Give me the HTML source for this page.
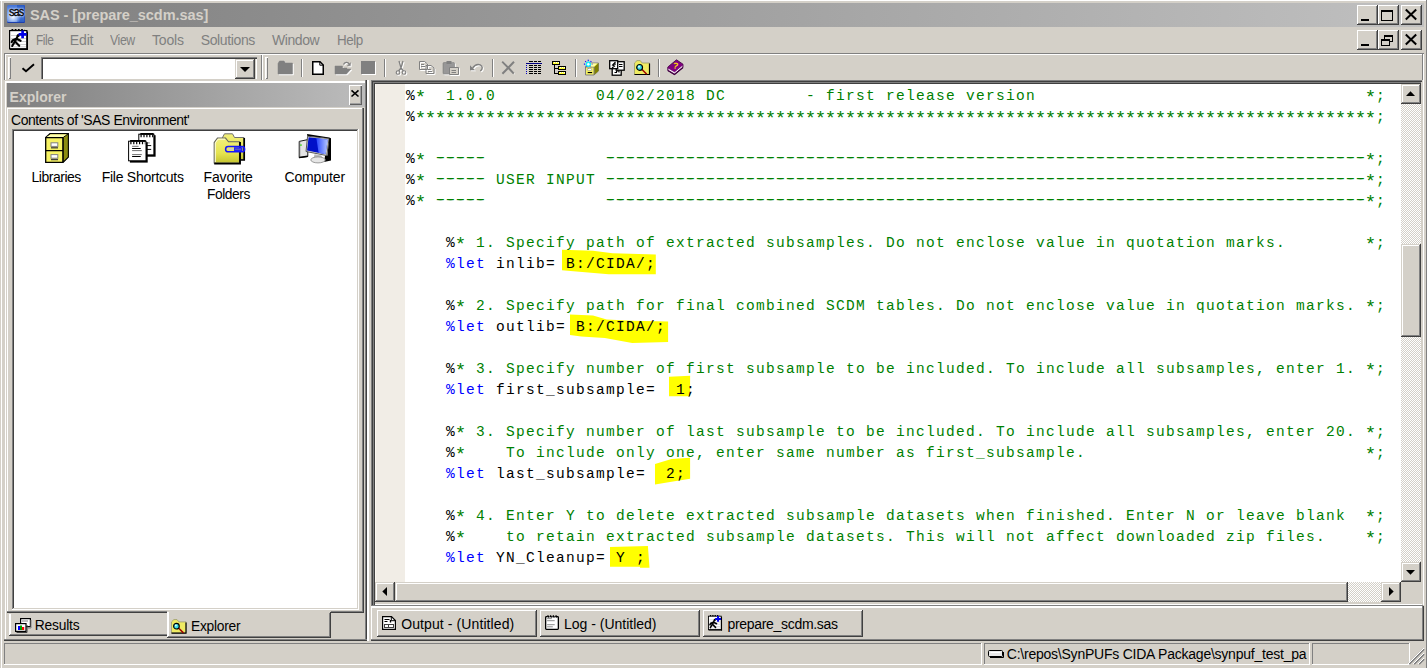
<!DOCTYPE html>
<html lang="en">
<head>
<meta charset="utf-8">
<title>SAS - [prepare_scdm.sas]</title>
<style>
*{box-sizing:border-box;margin:0;padding:0}
html,body{width:1427px;height:668px;overflow:hidden;background:#d4d0c8}
body{position:relative;font-family:"Liberation Sans","DejaVu Sans",sans-serif;font-size:14px;color:#000}
.a{position:absolute}
.raised{box-shadow:inset -1px -1px #404040,inset 1px 1px #fff,inset -2px -2px #808080,inset 2px 2px #d4d0c8;background:#d4d0c8}
.raisedsb{box-shadow:inset -1px -1px #404040,inset 1px 1px #d4d0c8,inset -2px -2px #808080,inset 2px 2px #fff;background:#d4d0c8}
.raised1{box-shadow:inset -1px -1px #808080,inset 1px 1px #fff;background:#d4d0c8}
.sunken{box-shadow:inset -1px -1px #fff,inset 1px 1px #808080,inset -2px -2px #d4d0c8,inset 2px 2px #404040}
.sunken1{box-shadow:inset -1px -1px #fff,inset 1px 1px #808080}
.pressed{box-shadow:inset -1px -1px #fff,inset 1px 1px #404040,inset -2px -2px #d4d0c8,inset 2px 2px #808080;background:#d4d0c8}
.t{position:absolute;white-space:pre;line-height:1}
.menu{color:#808080;font-size:15.5px;top:32px}
.cl{position:absolute;left:406px;height:21px;line-height:21px;white-space:pre;font-family:"Liberation Mono","DejaVu Sans Mono",monospace;font-size:14.5px;letter-spacing:1.2985px}
.ds{text-shadow:1.6px 0 0 #008000,-1.6px 0 0 #008000;position:relative;top:-1px}
.st{font-size:19px;letter-spacing:-1.402px;position:relative;top:2.5px;left:-1.3px;line-height:1px}
.dither{background-image:conic-gradient(#fff 25%,#d4d0c8 0 50%,#fff 0 75%,#d4d0c8 0);background-size:2px 2px}
svg{position:absolute;overflow:visible}
</style>
</head>
<body>
<!-- window frame -->
<div class="a" style="left:0;top:0;width:1427px;height:1px;background:#fff"></div>
<div class="a" style="left:1426px;top:0;width:1px;height:668px;background:#808080"></div>
<div class="a" style="left:1px;top:0;width:1px;height:668px;background:#fff"></div>

<!-- title bar -->
<div class="a" id="titlebar" style="left:4px;top:3px;width:1420px;height:24px;background:linear-gradient(90deg,#808080,#c0c0c0)"></div>
<div class="a" style="left:7px;top:5px;width:18px;height:18px;border-radius:2px 1px 1px 1px;background:radial-gradient(circle at 6px 12px,#fff 0,#b4ccf6 3px,rgba(120,160,235,0) 8px),linear-gradient(90deg,rgba(255,255,255,.12) 0 55%,rgba(0,0,0,.06) 55%),linear-gradient(180deg,#2a5fd0 0,#5a8ee8 40%,#4a7ee2 56%,#2f62d0 100%);box-shadow:inset 0 -1px #1c3fae,inset -1px 0 #2a52c0"></div>
<div class="t" style="left:8.5px;top:5.5px;font-size:12px;letter-spacing:-1px;color:#000;-webkit-text-stroke:0.3px #000;text-shadow:0 0 2px #e4ecff,0 0 2px #e4ecff,0 0 3px #cfdcff;transform-origin:0 0;transform:scaleX(.92)">sas</div>

<div class="t" style="left:29.90px;top:7.75px;font-size:14.5px;font-weight:bold;color:#d4d0c8;letter-spacing:-0.056px">SAS - [prepare_scdm.sas]</div>

<div class="a raised" style="left:1357px;top:5px;width:21px;height:20px;"></div>
<div class="a" style="left:1361px;top:19px;width:8px;height:2px;background:#000"></div>
<div class="a raised" style="left:1378px;top:5px;width:21px;height:20px;"></div>
<div class="a" style="left:1381px;top:10px;width:12px;height:11px;border:1px solid #000;border-top-width:2px"></div>
<div class="a raised" style="left:1401px;top:5px;width:21px;height:20px;"></div>
<svg style="left:1405px;top:9px" width="12" height="11" viewBox="0 0 12 11"><path d="M0.8 0.5 L11.2 10.5 M11.2 0.5 L0.8 10.5" stroke="#000" stroke-width="2" fill="none"/></svg>
<div class="a raised" style="left:1357px;top:30px;width:21px;height:20px;"></div>
<div class="a" style="left:1361px;top:44px;width:8px;height:2px;background:#000"></div>
<div class="a raised" style="left:1378px;top:30px;width:21px;height:20px;"></div>
<div class="a" style="left:1384px;top:35px;width:9px;height:7px;border:1px solid #000;border-top-width:2px"></div>
<div class="a" style="left:1381px;top:39px;width:9px;height:7px;border:1px solid #000;border-top-width:2px;background:#d4d0c8"></div>
<div class="a raised" style="left:1401px;top:30px;width:21px;height:20px;"></div>
<svg style="left:1405px;top:34px" width="12" height="11" viewBox="0 0 12 11"><path d="M0.8 0.5 L11.2 10.5 M11.2 0.5 L0.8 10.5" stroke="#000" stroke-width="2" fill="none"/></svg>


<!-- menu bar -->
<svg style="left:9px;top:29px" width="19" height="21" viewBox="0 0 19 21">
<rect x="0.6" y="1.6" width="17.3" height="18.3" fill="#fff" stroke="#000" stroke-width="1.2"/>
<path d="M2.5 0.8h13" stroke="#000" stroke-width="1.6" stroke-dasharray="1.8 1.4"/>
<path d="M2 6.5h15M2 9.5h15M2 12.5h15M2 15.5h15M2 17.8h15" stroke="#cfcfcf"/>
<rect x="17.6" y="2.5" width="1.4" height="18.5" fill="#000"/><rect x="1" y="19.4" width="18" height="1.6" fill="#000"/>
<path d="M8.6 7.2L5.6 13.4M6.4 11.6L3.2 17M6 12.6L10.2 16.8M7.4 9.8L11.6 11.8M7.2 9.6L3.6 11.4L2.6 13.2" stroke="#000" stroke-width="2.1" fill="none" stroke-linecap="round"/>
<circle cx="9.2" cy="6.6" r="1.5" fill="#000"/>
<path d="M13.6 1.4v7.8M9.6 5.3h8" stroke="#0000e8" stroke-width="2.7"/>
</svg>

<div class="t" style="left:35.85px;top:32.50px;font-size:14px;font-weight:normal;color:#808080;letter-spacing:-0.450px;transform-origin:0 0;transform:scaleX(0.8471)">File</div>
<div class="t" style="left:69.80px;top:32.50px;font-size:14px;font-weight:normal;color:#808080;letter-spacing:-0.145px">Edit</div>
<div class="t" style="left:110.00px;top:32.50px;font-size:14px;font-weight:normal;color:#808080;letter-spacing:-0.450px;transform-origin:0 0;transform:scaleX(0.8774)">View</div>
<div class="t" style="left:152.00px;top:32.50px;font-size:14px;font-weight:normal;color:#808080;letter-spacing:-0.171px">Tools</div>
<div class="t" style="left:200.70px;top:32.50px;font-size:14px;font-weight:normal;color:#808080;letter-spacing:-0.374px">Solutions</div>
<div class="t" style="left:272.00px;top:32.50px;font-size:14px;font-weight:normal;color:#808080;letter-spacing:-0.417px">Window</div>
<div class="t" style="left:336.74px;top:32.50px;font-size:14px;font-weight:normal;color:#808080;letter-spacing:-0.450px;transform-origin:0 0;transform:scaleX(0.9566)">Help</div>


<!-- toolbar -->
<div class="a" style="left:4px;top:53px;width:1420px;height:1px;background:#808080"></div>
<div class="a" style="left:4px;top:54px;width:1420px;height:1px;background:#fff"></div>
<div class="a" style="left:4px;top:54px;width:1px;height:26px;background:#808080"></div>
<div class="a" style="left:5px;top:55px;width:1px;height:25px;background:#fff"></div>
<div class="a" style="left:1422px;top:54px;width:1px;height:27px;background:#808080"></div>
<div class="a" style="left:1423px;top:54px;width:1px;height:551px;background:#fff"></div>
<div class="a" style="left:8px;top:57px;width:3px;height:22px;box-shadow:inset 1px 1px #fff,inset -1px -1px #808080;background:#f0eeea"></div>
<svg style="left:21px;top:63px" width="14" height="10" viewBox="0 0 14 10"><path d="M1.5 5.2 L5 8.3 L13 1.2" stroke="#000" stroke-width="1.9" fill="none"/></svg>
<div class="a" style="left:41px;top:57px;width:216px;height:22px;background:#fff;box-shadow:inset 1px 1px #808080,inset 2px 2px #404040,inset -1px 0 #fff,inset -2px 0 #d4d0c8"></div>
<div class="a raisedsb" style="left:235px;top:59px;width:20px;height:20px;"></div>
<svg style="left:240px;top:67px" width="10" height="5" viewBox="0 0 10 5"><path d="M0 0h10l-5 5z" fill="#000"/></svg>
<div class="a" style="left:261px;top:55px;width:1px;height:25px;background:#808080"></div>
<div class="a" style="left:262px;top:55px;width:1px;height:25px;background:#fff"></div>
<div class="a" style="left:265px;top:57px;width:3px;height:22px;box-shadow:inset 1px 1px #fff,inset -1px -1px #808080;background:#f0eeea"></div>
<svg style="left:278px;top:61px" width="16" height="14" viewBox="0 0 16 14"><g transform="translate(1,1)" fill="#fff" stroke="#fff"><path d="M0 13V2.5L1.5 0H6L7.5 2H14.5V13Z" stroke-width="0.5"/></g><g fill="#808080" stroke="#808080"><path d="M0 13V2.5L1.5 0H6L7.5 2H14.5V13Z" stroke-width="0.5"/></g></svg>
<div class="a" style="left:301px;top:59px;width:1px;height:18px;background:#808080"></div>
<div class="a" style="left:302px;top:59px;width:1px;height:18px;background:#fff"></div>
<svg style="left:312px;top:61px" width="12" height="14" viewBox="0 0 12 14"><path d="M0.75 0.75H8L11.25 4V13.25H0.75Z" fill="#fff" stroke="#000" stroke-width="1.5"/><path d="M7.8 0.8V4.2H11.2" fill="none" stroke="#000" stroke-width="1"/></svg>
<svg style="left:335px;top:61px" width="17" height="14" viewBox="0 0 17 14"><g transform="translate(1,1)" fill="#fff" stroke="#fff"><path d="M0 13V5H7.5V7H12V8H16L11.5 13Z" stroke-width="0.5"/><path d="M8.5 3.5C9.5 0.8 13 0.5 14.3 3.2" fill="none" stroke-width="1.2"/><path d="M15.5 1.5V4.8H12.2Z" stroke-width="0.3"/></g><g fill="#808080" stroke="#808080"><path d="M0 13V5H7.5V7H12V8H16L11.5 13Z" stroke-width="0.5"/><path d="M8.5 3.5C9.5 0.8 13 0.5 14.3 3.2" fill="none" stroke-width="1.2"/><path d="M15.5 1.5V4.8H12.2Z" stroke-width="0.3"/></g></svg>
<svg style="left:361px;top:61px" width="15" height="14" viewBox="0 0 15 14"><g transform="translate(1,1)" fill="#fff" stroke="#fff"><rect x="0" y="0" width="14" height="13" stroke="none"/></g><g fill="#808080" stroke="#808080"><rect x="0" y="0" width="14" height="13" stroke="none"/></g></svg>
<div class="a" style="left:384px;top:59px;width:1px;height:18px;background:#808080"></div>
<div class="a" style="left:385px;top:59px;width:1px;height:18px;background:#fff"></div>
<svg style="left:396px;top:61px" width="11" height="15" viewBox="0 0 11 15"><g transform="translate(1,1)" fill="#fff" stroke="#fff"><path d="M3 0L5 7L7 0M5 7L2.5 10M5 7L7.5 10" fill="none" stroke-width="1.3"/><circle cx="2" cy="11.5" r="1.8" fill="none" stroke-width="1.1"/><circle cx="8" cy="11.5" r="1.8" fill="none" stroke-width="1.1"/></g><g fill="#808080" stroke="#808080"><path d="M3 0L5 7L7 0M5 7L2.5 10M5 7L7.5 10" fill="none" stroke-width="1.3"/><circle cx="2" cy="11.5" r="1.8" fill="none" stroke-width="1.1"/><circle cx="8" cy="11.5" r="1.8" fill="none" stroke-width="1.1"/></g></svg>
<svg style="left:419px;top:61px" width="17" height="14" viewBox="0 0 17 14"><g transform="translate(1,1)" fill="#fff" stroke="#fff"><path d="M0.5 0.5H5.5L8.5 3V8.5H0.5Z M7 4.5H12L15 7V12.5H7Z" fill="none" stroke-width="1"/><path d="M2 3.5H5M2 5.5H6M9 8.5H12M9 10.5H13" fill="none" stroke-width="1"/></g><g fill="#808080" stroke="#808080"><path d="M0.5 0.5H5.5L8.5 3V8.5H0.5Z M7 4.5H12L15 7V12.5H7Z" fill="none" stroke-width="1"/><path d="M2 3.5H5M2 5.5H6M9 8.5H12M9 10.5H13" fill="none" stroke-width="1"/></g></svg>
<svg style="left:443px;top:61px" width="17" height="15" viewBox="0 0 17 15"><g transform="translate(1,1)" fill="#fff" stroke="#fff"><rect x="0" y="1.5" width="11.5" height="11.5" rx="1" fill-opacity=".8" stroke-width=".6"/><rect x="3.5" y="0" width="5" height="3" stroke="none"/><path d="M6.5 6.5H15.5V13.5H6.5Z" fill="#d4d0c8" stroke-width="1"/><path d="M8.5 9.5H13M8.5 11.5H13" fill="none" stroke-width="1"/></g><g fill="#808080" stroke="#808080"><rect x="0" y="1.5" width="11.5" height="11.5" rx="1" fill-opacity=".8" stroke-width=".6"/><rect x="3.5" y="0" width="5" height="3" stroke="none"/><path d="M6.5 6.5H15.5V13.5H6.5Z" fill="#d4d0c8" stroke-width="1"/><path d="M8.5 9.5H13M8.5 11.5H13" fill="none" stroke-width="1"/></g></svg>
<svg style="left:470px;top:63px" width="14" height="10" viewBox="0 0 14 10"><g transform="translate(1,1)" fill="#fff" stroke="#fff"><path d="M0 2.2V7.2H5Z" stroke="none"/><path d="M2.6 5C4.5 2.2 7.5 0.9 10.2 1.8C13 3 12.8 6.4 10.3 7.9" fill="none" stroke-width="1.4"/></g><g fill="#808080" stroke="#808080"><path d="M0 2.2V7.2H5Z" stroke="none"/><path d="M2.6 5C4.5 2.2 7.5 0.9 10.2 1.8C13 3 12.8 6.4 10.3 7.9" fill="none" stroke-width="1.4"/></g></svg>
<div class="a" style="left:492px;top:59px;width:1px;height:18px;background:#808080"></div>
<div class="a" style="left:493px;top:59px;width:1px;height:18px;background:#fff"></div>
<svg style="left:501px;top:61px" width="15" height="14" viewBox="0 0 15 14"><path d="M2 1L13.6 13.2" stroke="#fff" stroke-width="1.2" fill="none"/><path d="M1.2 0.6L9 8.5L12.8 12.6M13 0.8L1.4 12.8" stroke="#808080" stroke-width="2" fill="none"/></svg>
<svg style="left:526px;top:61px" width="16" height="13" viewBox="0 0 16 13" shape-rendering="crispEdges"><rect x="3" y="0" width="4" height="1" fill="#000"/><rect x="8" y="0" width="3" height="1" fill="#000"/><rect x="12" y="0" width="3" height="1" fill="#000"/><rect x="3" y="4" width="4" height="1" fill="#000"/><rect x="8" y="4" width="3" height="1" fill="#000"/><rect x="12" y="4" width="3" height="1" fill="#000"/><rect x="3" y="6" width="4" height="1" fill="#000"/><rect x="8" y="6" width="3" height="1" fill="#000"/><rect x="12" y="6" width="3" height="1" fill="#000"/><rect x="3" y="8" width="4" height="1" fill="#000"/><rect x="8" y="8" width="3" height="1" fill="#000"/><rect x="12" y="8" width="3" height="1" fill="#000"/><rect x="3" y="10" width="4" height="1" fill="#000"/><rect x="8" y="10" width="3" height="1" fill="#000"/><rect x="12" y="10" width="3" height="1" fill="#000"/><rect x="3" y="12" width="4" height="1" fill="#000"/><rect x="8" y="12" width="3" height="1" fill="#000"/><rect x="12" y="12" width="3" height="1" fill="#000"/><rect x="0" y="2" width="16" height="1" fill="#000080"/><rect x="0" y="4" width="1" height="1" fill="#0000c0"/><rect x="0" y="6" width="1" height="1" fill="#0000c0"/><rect x="0" y="8" width="1" height="1" fill="#0000c0"/><rect x="0" y="10" width="1" height="1" fill="#0000c0"/><rect x="0" y="12" width="1" height="1" fill="#0000c0"/></svg>
<svg style="left:552px;top:61px" width="14" height="14" viewBox="0 0 14 14" shape-rendering="crispEdges"><path d="M2.5 4V12.5H6M2.5 7.5H6" stroke="#000" fill="none" stroke-width="1"/><rect x="0.5" y="0.5" width="7" height="3" fill="#ffff30" stroke="#000" stroke-width="1"/><rect x="2" y="1" width="1" height="1" fill="#fff"/><rect x="4" y="1" width="1" height="1" fill="#fff"/><rect x="6" y="1" width="1" height="1" fill="#fff"/><rect x="6.5" y="5.5" width="7" height="3" fill="#ffff30" stroke="#000" stroke-width="1"/><rect x="8" y="6" width="1" height="1" fill="#fff"/><rect x="10" y="6" width="1" height="1" fill="#fff"/><rect x="12" y="6" width="1" height="1" fill="#fff"/><rect x="6.5" y="10.5" width="7" height="3" fill="#ffff30" stroke="#000" stroke-width="1"/><rect x="8" y="11" width="1" height="1" fill="#fff"/><rect x="10" y="11" width="1" height="1" fill="#fff"/><rect x="12" y="11" width="1" height="1" fill="#fff"/></svg>
<div class="a" style="left:575px;top:59px;width:1px;height:18px;background:#808080"></div>
<div class="a" style="left:576px;top:59px;width:1px;height:18px;background:#fff"></div>
<svg style="left:584px;top:59px" width="16" height="17" viewBox="0 0 16 17"><path d="M1.5 8L4 4H14.5V12L10 16H1.5Z" fill="#f4f060" stroke="#808080" stroke-width="1"/><path d="M10 8L14.5 4V12L10 16Z" fill="#808000"/><path d="M1.5 8H10V16" fill="none" stroke="#808080" stroke-width="1"/><path d="M2.4 7.4L4.4 4.6H13L10 7.4Z" fill="#ffffa8"/><rect x="3.7" y="9.7" width="3.8" height="1.7" fill="#fff" stroke="#a0a0a0" stroke-width=".6"/><rect x="3.7" y="13" width="4.4" height="1.1" fill="#000"/><g transform="translate(4.3,5.2)"><path d="M0 -4.4V4.4M-4.4 0H4.4M-3 -3L3 3M3 -3L-3 3" stroke="#0000ff" stroke-width="1.3" stroke-dasharray="1 1.1"/><circle r="2.6" fill="#00e8ff"/><path d="M0 -3.4L1 -1L3.4 0L1 1L0 3.4L-1 1L-3.4 0L-1 -1Z" fill="#30f0ff"/><circle r="1.2" fill="#fff"/></g></svg>
<svg style="left:609px;top:60px" width="16" height="16" viewBox="0 0 16 16"><rect x="3.2" y="6.2" width="9" height="9" fill="#fff" stroke="#000" stroke-width="1.3"/><rect x="7.2" y="1.7" width="8" height="8.5" fill="#fff" stroke="#000" stroke-width="1.3"/><rect x="0.7" y="0.7" width="8" height="8" fill="#fff" stroke="#000" stroke-width="1.3"/><path d="M6.5 2L3.5 5L5.5 6L3 8M4 4.5L7 4M10 4.5H13.5M10 6.5H13.5M5.5 12.5H7.5V11H10V12.5" stroke="#000" stroke-width="1.1" fill="none"/></svg>
<svg style="left:634px;top:60px" width="16" height="15" viewBox="0 0 16 15"><path d="M0.5 14.5V3L3 0.6H6.2L8.2 3H15.5V14.5Z" fill="#efeb62" stroke="#a0a070" stroke-width=".9"/><path d="M0.5 14.5H15.5V3.5" fill="none" stroke="#000" stroke-width="1.2"/><path d="M8 9.5L12.8 14.3" stroke="#a00000" stroke-width="1.5"/><circle cx="5.6" cy="7.4" r="2.9" fill="#38dce8" stroke="#000" stroke-width="1.2"/><circle cx="5" cy="6.8" r="1" fill="#e0ffff"/></svg>
<div class="a" style="left:658px;top:59px;width:1px;height:18px;background:#808080"></div>
<div class="a" style="left:659px;top:59px;width:1px;height:18px;background:#fff"></div>
<svg style="left:667px;top:59px" width="17" height="16" viewBox="0 0 17 16"><path d="M0.8 8L9.5 0.8L16 5.2V8.5L7.5 15.5L0.8 11.5Z" fill="#800080" stroke="#400040" stroke-width=".8"/><path d="M1.2 9.2L7.6 13L15.6 6.2V8.3L7.6 14.9L1.2 11.2Z" fill="#fff" stroke="#600060" stroke-width=".5"/><path d="M0.8 11.5L7.5 15.5L16 8.5" fill="none" stroke="#400040" stroke-width="1.1"/><text x="8.6" y="9.6" font-family="Liberation Sans,sans-serif" font-weight="bold" font-size="8.5" fill="#ffe000" text-anchor="middle" transform="rotate(12 8.6 7)">?</text></svg>


<!-- explorer panel -->
<div class="a" style="left:5px;top:81px;width:360px;height:1px;background:#fff"></div>
<div class="a" style="left:5px;top:82px;width:360px;height:1px;background:#fff"></div>
<div class="a" style="left:5px;top:82px;width:1px;height:558px;background:#fff"></div>
<div class="a" style="left:365px;top:80px;width:1px;height:560px;background:#808080"></div>
<div class="a" style="left:366px;top:80px;width:1px;height:561px;background:#404040"></div>
<div class="a" style="left:367px;top:80px;width:1px;height:561px;background:#fff"></div>
<div class="a" style="left:368px;top:80px;width:1px;height:561px;background:#fff"></div>
<div class="a" style="left:7px;top:83px;width:358px;height:24px;background:linear-gradient(90deg,#808080,#bcbcbc)"></div>
<div class="t" style="left:9.60px;top:90.00px;font-size:14px;font-weight:bold;color:#d4d0c8;letter-spacing:0.021px">Explorer</div>
<div class="a" style="left:349px;top:85px;width:13px;height:20px;box-shadow:inset 1px 1px #fff,inset -1px -1px #606060,inset -2px -2px #a0a0a0;background:#d4d0c8"></div>
<svg style="left:351px;top:90px" width="8" height="7" viewBox="0 0 8 7"><path d="M0.5 0.3L7.5 6.5M7.5 0.3L0.5 6.5" stroke="#000" stroke-width="1.6" fill="none"/></svg>
<div class="a" style="left:7px;top:108px;width:356px;height:1px;background:#fff"></div>
<div class="a" style="left:7px;top:108px;width:1px;height:504px;background:#fff"></div>
<div class="a" style="left:362px;top:108px;width:1px;height:504px;background:#808080"></div>
<div class="a" style="left:363px;top:108px;width:1px;height:505px;background:#404040"></div>
<div class="a" style="left:7px;top:611px;width:160px;height:1px;background:#808080"></div>
<div class="a" style="left:7px;top:612px;width:160px;height:1px;background:#404040"></div>
<div class="a" style="left:331px;top:611px;width:32px;height:1px;background:#808080"></div>
<div class="a" style="left:331px;top:612px;width:33px;height:1px;background:#404040"></div>
<div class="t" style="left:11.20px;top:113.10px;font-size:14.2px;font-weight:normal;color:#000;letter-spacing:-0.450px;transform-origin:0 0;transform:scaleX(0.9857)">Contents of &#x27;SAS Environment&#x27;</div>
<div class="a sunken" style="left:12px;top:129px;width:347px;height:481px;background:#fff"></div>
<svg style="left:45px;top:133px" width="24" height="30" viewBox="0 0 24 30"><path d="M0.7 4.6L5 0.7H23.3V24L18 29.3H0.7Z" fill="#f6f264" stroke="#000" stroke-width="1.3"/>
<path d="M18 4.6L23.3 0.7V24L18 29.3Z" fill="#8c8c10" stroke="#000" stroke-width="1"/>
<path d="M1.6 4L5.4 1.5H21.6L17.8 4Z" fill="#fdfdb0"/>
<path d="M0.7 4.6H18M0.7 17.6H18M18 4.6V29.3" stroke="#000" stroke-width="1.2" fill="none"/>
<rect x="6" y="9.8" width="6.8" height="3.6" fill="#fff" stroke="#808080" stroke-width="1"/><path d="M6 14.8H13" stroke="#404040" stroke-width="1.3"/>
<rect x="6" y="21.6" width="6.8" height="3.6" fill="#fff" stroke="#808080" stroke-width="1"/><path d="M6 26.6H13" stroke="#404040" stroke-width="1.3"/></svg>
<svg style="left:128px;top:133px" width="28" height="30" viewBox="0 0 28 30"><rect x="12.1" y="2.2" width="15.5" height="21.5" fill="#000"/><rect x="10.8" y="1.2" width="15.1" height="20.7" fill="#fff" stroke="#000" stroke-width="1"/><rect x="12.3" y="0" width="13.3" height="1.8" fill="#000"/><path d="M12.5 3H25.1" stroke="#000" stroke-width="2.6" stroke-dasharray="1.2 1.7"/><path d="M19 9.9H21.8" stroke="#808080" stroke-width="1"/><path d="M19 12.6H23.2M19 16.4H23.2" stroke="#000" stroke-width="1"/><rect x="1.9" y="9.2" width="17.8" height="20.4" fill="#000"/><rect x="0.6" y="8.2" width="17.4" height="19.6" fill="#fff" stroke="#000" stroke-width="1"/><rect x="2.1" y="7" width="15.6" height="1.8" fill="#000"/><path d="M2.3 10H17.2" stroke="#000" stroke-width="2.6" stroke-dasharray="1.2 1.7"/><path d="M4.1 13.3H10.6M4.1 17.6H13.8M4.1 21.6H13.8" stroke="#707070" stroke-width="1"/><path d="M4.1 15.5H12.7M4.1 23.5H12.7" stroke="#000" stroke-width="1.1"/></svg>
<svg style="left:213px;top:133px" width="32" height="32" viewBox="0 0 32 32"><defs><linearGradient id="fg" x1="0" y1="0" x2="0" y2="1"><stop offset="0" stop-color="#f2f07c"/><stop offset=".6" stop-color="#e6e450"/><stop offset="1" stop-color="#c4c430"/></linearGradient></defs><path d="M9.5 4.5L11.5 0.8H19.5L21.5 4.5H31V26.5H9.5Z" fill="url(#fg)" stroke="#707070" stroke-width="1"/><path d="M27.5 27H31.2V5" fill="none" stroke="#000" stroke-width="1.7"/><path d="M1.2 30V9.5L4.5 5H12.5L15.5 8.8H26.5V30Z" fill="url(#fg)" stroke="#606060" stroke-width="1.1"/><path d="M1.2 30.6H27V9" fill="none" stroke="#000" stroke-width="1.9"/><path d="M2.3 29V10L5 6.2H12" fill="none" stroke="#fcfce0" stroke-width="1"/><rect x="12.6" y="13.6" width="19" height="5.2" rx="2.6" fill="none" stroke="#1414ff" stroke-width="1.5"/><path d="M21 14.2H29.5V18.2H21Z" fill="#2020ff"/><path d="M15.5 16.2H20.5" stroke="#c8c8c8" stroke-width="1.6"/><path d="M22.5 16.2H28" stroke="#c0c050" stroke-width="1" stroke-dasharray="1 1"/></svg>
<svg style="left:298px;top:133px" width="34" height="31" viewBox="0 0 34 31"><defs><linearGradient id="sg" x1="0" y1="0" x2="1" y2="0"><stop offset="0" stop-color="#2a48ff"/><stop offset="1" stop-color="#b4c6ff"/></linearGradient></defs><path d="M1.2 8.4L9.8 6.6V23.5L1.2 24.7Z" fill="#e4e4e4" stroke="#000" stroke-width=".9"/><path d="M1.6 8.6V24.4" stroke="#606060" stroke-width="1.2"/><path d="M1.2 24.4L9.8 23.3" stroke="#000" stroke-width="1.5"/><rect x="2.2" y="11.3" width="1.5" height="1.6" fill="#40d020"/><path d="M9 1L20 2.8L31.2 4.6L33 5.2V27.5L26 29L27 23L29.5 22.6L31 5.6L9.4 3Z" fill="#000"/><path d="M9.6 3.2L31 5.5L28.8 22.6L8 18.5Z" fill="#e0e0d8" stroke="#303030" stroke-width=".8"/><path d="M10.6 4.3L29.7 6.4L27.6 21.2L9 17.5Z" fill="#0010c8"/><path d="M18.4 5.2L29.7 6.4L27.6 21.2L20.6 19.8Z" fill="url(#sg)"/><path d="M16.5 21.2L23.5 22.6L24.5 26H15.5Z" fill="#b8b8b8"/><ellipse cx="20" cy="26.9" rx="7.2" ry="3" fill="#e6e6e6" stroke="#909090" stroke-width=".9"/></svg>
<svg style="left:15px;top:618px" width="17" height="15" viewBox="0 0 17 15"><rect x="5.6" y="0.6" width="9.8" height="8" fill="#fff" stroke="#000" stroke-width="1.2"/><path d="M7 3H13" stroke="#808080"/><path d="M16 2V10H13" stroke="#808080" stroke-width="1" fill="none"/><rect x="0.6" y="5.6" width="10.4" height="7.8" fill="#fff" stroke="#000" stroke-width="1.2"/><path d="M1.5 14.5H12V7" stroke="#404040" stroke-width="1" fill="none"/><rect x="3" y="8" width="2" height="4" fill="#0000ff"/><rect x="5" y="7.5" width="2" height="4.5" fill="#00a000"/><rect x="7" y="9" width="2.2" height="3" fill="#ff0000"/></svg>
<svg style="left:171px;top:619px" width="15.52" height="14.55" viewBox="0 0 16 15"><path d="M0.5 14.5V3L3 0.6H6.2L8.2 3H15.5V14.5Z" fill="#efeb62" stroke="#a0a070" stroke-width=".9"/><path d="M0.5 14.5H15.5V3.5" fill="none" stroke="#000" stroke-width="1.2"/><path d="M8 9.5L12.8 14.3" stroke="#a00000" stroke-width="1.5"/><circle cx="5.6" cy="7.4" r="2.9" fill="#38dce8" stroke="#000" stroke-width="1.2"/><circle cx="5" cy="6.8" r="1" fill="#e0ffff"/></svg>
<div class="t" style="left:31.50px;top:169.50px;font-size:14px;font-weight:normal;color:#000;letter-spacing:-0.486px">Libraries</div>
<div class="t" style="left:101.70px;top:169.50px;font-size:14px;font-weight:normal;color:#000;letter-spacing:-0.253px">File Shortcuts</div>
<div class="t" style="left:203.60px;top:169.50px;font-size:14px;font-weight:normal;color:#000;letter-spacing:-0.184px">Favorite</div>
<div class="t" style="left:206.72px;top:186.50px;font-size:14px;font-weight:normal;color:#000;letter-spacing:-0.450px;transform-origin:0 0;transform:scaleX(0.9841)">Folders</div>
<div class="t" style="left:284.40px;top:169.50px;font-size:14px;font-weight:normal;color:#000;letter-spacing:-0.115px">Computer</div>
<div class="a" style="left:9px;top:614px;width:1px;height:21px;background:#fff"></div>
<div class="a" style="left:10px;top:614px;width:1px;height:21px;background:#fff"></div>
<div class="a" style="left:10px;top:634px;width:157px;height:1px;background:#808080"></div>
<div class="a" style="left:9px;top:635px;width:158px;height:1px;background:#404040"></div>
<div class="t" style="left:34.70px;top:618.60px;font-size:13.8px;font-weight:normal;color:#000;letter-spacing:-0.168px">Results</div>
<div class="a" style="left:167px;top:612px;width:1px;height:25px;background:#fff"></div>
<div class="a" style="left:168px;top:612px;width:1px;height:25px;background:#fff"></div>
<div class="a" style="left:168px;top:636px;width:162px;height:1px;background:#808080"></div>
<div class="a" style="left:167px;top:637px;width:164px;height:1px;background:#404040"></div>
<div class="a" style="left:329px;top:613px;width:1px;height:24px;background:#808080"></div>
<div class="a" style="left:330px;top:612px;width:1px;height:26px;background:#404040"></div>
<div class="t" style="left:191.00px;top:619.60px;font-size:13.8px;font-weight:normal;color:#000;letter-spacing:-0.254px">Explorer</div>
<div class="a" style="left:4px;top:639px;width:363px;height:1px;background:#808080"></div>
<div class="a" style="left:4px;top:640px;width:363px;height:1px;background:#404040"></div>


<!-- editor -->
<div class="a" id="editor" style="left:375px;top:84px;width:1026px;height:498px;background:#fff"></div>
<div class="a" id="gutter" style="left:375px;top:84px;width:30px;height:498px;background:#f1ede6;border-left:1px solid #fcf8f1"></div>
<svg id="hl" style="left:0;top:0" width="1427" height="668">
<polygon fill="#ffff00" points="562,249.7 593,250.7 612.6,253.3 655.8,254.6 655.8,274.3 608.7,274.3 573.4,271.3 562,270.3"/>
<polygon fill="#ffff00" points="570,314.5 593,315.5 606.7,319.4 632.2,320.8 668.1,321.4 668.1,342 632.2,343 604.8,338 581.2,336.5 570,335.1"/>
<polygon fill="#ffff00" points="669,376.7 690.1,375.7 690.1,396.3 669,396.3"/>
<polygon fill="#ffff00" points="655,464 671.5,459.1 690.1,457.8 690.1,478.8 671.5,481.7 655,484.6"/>
<polygon fill="#ffff00" points="610,547.1 647.9,546.1 649.5,567.7 640,567.7 640,566.7 610,566.7"/>
</svg>
<div class="cl" style="top:86px"><span style="color:#000">%</span><span class="st" style="color:#008000">*</span><span style="color:#008000">  1.0.0          04/02/2018 DC        </span><span style="color:#008000">-</span><span style="color:#008000"> first release version                                 </span><span class="st" style="color:#008000">*</span><span style="color:#008000">;</span></div>
<div class="cl" style="top:107px"><span style="color:#000">%</span><span class="st" style="color:#008000">************************************************************************************************</span><span style="color:#008000">;</span></div>
<div class="cl" style="top:149px"><span style="color:#000">%</span><span class="st" style="color:#008000">*</span><span style="color:#008000"> </span><span class="ds" style="color:#008000">-----</span><span style="color:#008000">            </span><span class="ds" style="color:#008000">----------------------------------------------------------------------------</span><span class="st" style="color:#008000">*</span><span style="color:#008000">;</span></div>
<div class="cl" style="top:170px"><span style="color:#000">%</span><span class="st" style="color:#008000">*</span><span style="color:#008000"> </span><span class="ds" style="color:#008000">-----</span><span style="color:#008000"> USER INPUT </span><span class="ds" style="color:#008000">----------------------------------------------------------------------------</span><span class="st" style="color:#008000">*</span><span style="color:#008000">;</span></div>
<div class="cl" style="top:191px"><span style="color:#000">%</span><span class="st" style="color:#008000">*</span><span style="color:#008000"> </span><span class="ds" style="color:#008000">-----</span><span style="color:#008000">            </span><span class="ds" style="color:#008000">----------------------------------------------------------------------------</span><span class="st" style="color:#008000">*</span><span style="color:#008000">;</span></div>
<div class="cl" style="top:233px"><span style="color:#000">    %</span><span class="st" style="color:#008000">*</span><span style="color:#008000"> 1. Specify path of extracted subsamples. Do not enclose value in quotation marks.        </span><span class="st" style="color:#008000">*</span><span style="color:#008000">;</span></div>
<div class="cl" style="top:254px"><span style="color:#000">    </span><span style="color:#0000ff">%let</span><span style="color:#000"> inlib= B:/CIDA/;</span></div>
<div class="cl" style="top:296px"><span style="color:#000">    %</span><span class="st" style="color:#008000">*</span><span style="color:#008000"> 2. Specify path for final combined SCDM tables. Do not enclose value in quotation marks. </span><span class="st" style="color:#008000">*</span><span style="color:#008000">;</span></div>
<div class="cl" style="top:317px"><span style="color:#000">    </span><span style="color:#0000ff">%let</span><span style="color:#000"> outlib= B:/CIDA/;</span></div>
<div class="cl" style="top:359px"><span style="color:#000">    %</span><span class="st" style="color:#008000">*</span><span style="color:#008000"> 3. Specify number of first subsample to be included. To include all subsamples, enter 1. </span><span class="st" style="color:#008000">*</span><span style="color:#008000">;</span></div>
<div class="cl" style="top:380px"><span style="color:#000">    </span><span style="color:#0000ff">%let</span><span style="color:#000"> first_subsample=  1;</span></div>
<div class="cl" style="top:422px"><span style="color:#000">    %</span><span class="st" style="color:#008000">*</span><span style="color:#008000"> 3. Specify number of last subsample to be included. To include all subsamples, enter 20. </span><span class="st" style="color:#008000">*</span><span style="color:#008000">;</span></div>
<div class="cl" style="top:443px"><span style="color:#000">    %</span><span class="st" style="color:#008000">*</span><span style="color:#008000">    To include only one, enter same number as first_subsample.                            </span><span class="st" style="color:#008000">*</span><span style="color:#008000">;</span></div>
<div class="cl" style="top:464px"><span style="color:#000">    </span><span style="color:#0000ff">%let</span><span style="color:#000"> last_subsample=  2;</span></div>
<div class="cl" style="top:506px"><span style="color:#000">    %</span><span class="st" style="color:#008000">*</span><span style="color:#008000"> 4. Enter Y to delete extracted subsample datasets when finished. Enter N or leave blank  </span><span class="st" style="color:#008000">*</span><span style="color:#008000">;</span></div>
<div class="cl" style="top:527px"><span style="color:#000">    %</span><span class="st" style="color:#008000">*</span><span style="color:#008000">    to retain extracted subsample datasets. This will not affect downloaded zip files.    </span><span class="st" style="color:#008000">*</span><span style="color:#008000">;</span></div>
<div class="cl" style="top:548px"><span style="color:#000">    </span><span style="color:#0000ff">%let</span><span style="color:#000"> YN_Cleanup= Y ;</span></div>

<div class="a" style="left:371px;top:80px;width:1053px;height:525px;box-shadow:inset 1px 1px #808080,inset 2px 2px #404040,inset 3px 3px #808080,inset 4px 4px #404040,inset -1px -1px #fff,inset -2px -2px #d4d0c8;pointer-events:none"></div>
<div class="a" style="left:1423px;top:54px;width:1px;height:551px;background:#fff"></div>
<div class="a" style="left:1422px;top:80px;width:1px;height:525px;background:#d4d0c8"></div>
<div class="a" style="left:1421px;top:82px;width:1px;height:522px;background:#d4d0c8"></div>
<div class="a dither" style="left:1401px;top:84px;width:20px;height:498px;"></div>
<div class="a raisedsb" style="left:1401px;top:84px;width:20px;height:20px;"></div>
<svg style="left:1406px;top:91px" width="9" height="5" viewBox="0 0 9 5"><path d="M0 5h9L4.5 0.3z" fill="#000"/></svg>
<div class="a raisedsb" style="left:1401px;top:244px;width:20px;height:93px;"></div>
<div class="a raisedsb" style="left:1401px;top:562px;width:20px;height:20px;"></div>
<svg style="left:1406px;top:570px" width="9" height="5" viewBox="0 0 9 5"><path d="M0 0h9L4.5 4.7z" fill="#000"/></svg>
<div class="a dither" style="left:375px;top:582px;width:1026px;height:20px;"></div>
<div class="a raisedsb" style="left:375px;top:582px;width:20px;height:20px;"></div>
<svg style="left:382px;top:587px" width="5" height="9" viewBox="0 0 5 9"><path d="M5 0v9L0.3 4.5z" fill="#000"/></svg>
<div class="a raisedsb" style="left:395px;top:582px;width:953px;height:20px;"></div>
<div class="a raisedsb" style="left:1381px;top:582px;width:20px;height:20px;"></div>
<svg style="left:1389px;top:587px" width="5" height="9" viewBox="0 0 5 9"><path d="M0 0v9L4.7 4.5z" fill="#000"/></svg>
<div class="a" style="left:1401px;top:582px;width:22px;height:21px;background:#d4d0c8"></div>


<div class="a" style="left:371px;top:605px;width:1052px;height:1px;background:#808080"></div>
<div class="a" style="left:371px;top:606px;width:1052px;height:1px;background:#fff"></div>
<div class="a" style="left:371px;top:607px;width:1051px;height:1px;background:#fff"></div>
<div class="a" style="left:371px;top:606px;width:1px;height:34px;background:#fff"></div>
<div class="a" style="left:371px;top:639px;width:1053px;height:1px;background:#808080"></div>
<div class="a" style="left:371px;top:640px;width:1053px;height:1px;background:#404040"></div>
<div class="a" style="left:1422px;top:606px;width:1px;height:34px;background:#808080"></div>
<div class="a" style="left:1423px;top:606px;width:1px;height:35px;background:#404040"></div>
<div class="a raised" style="left:377px;top:610px;width:160px;height:27px;"></div>
<div class="a raised" style="left:540px;top:610px;width:160px;height:27px;"></div>
<div class="a raised" style="left:703px;top:610px;width:160px;height:27px;"></div>
<div class="t" style="left:401.20px;top:617.00px;font-size:14px;font-weight:normal;color:#000;letter-spacing:0.100px">Output - (Untitled)</div>
<div class="t" style="left:564.00px;top:617.00px;font-size:14px;font-weight:normal;color:#000;letter-spacing:-0.009px">Log - (Untitled)</div>
<div class="t" style="left:727.50px;top:617.00px;font-size:14px;font-weight:normal;color:#000;letter-spacing:-0.311px">prepare_scdm.sas</div>
<svg style="left:382px;top:616px" width="14" height="14" viewBox="0 0 14 14"><path d="M0.6 0.6H9.5L13.4 4.5V13.4H0.6Z" fill="#fff" stroke="#000" stroke-width="1.2"/><path d="M9.3 0.8V4.7H13.2" fill="none" stroke="#000" stroke-width="1"/><path d="M2.5 3.5H7.5M2.5 5.5H5.5" stroke="#000" stroke-width="1"/><path d="M8.5 4V6.5" stroke="#000" stroke-width="1.4"/><rect x="2.5" y="8.5" width="9" height="3" fill="#fff" stroke="#404040" stroke-width="1"/><path d="M6.5 8.5V11.5" stroke="#404040"/></svg>
<svg style="left:545px;top:615px" width="14" height="15" viewBox="0 0 14 15"><rect x="0.65" y="1.6" width="12.7" height="12.7" rx="0.8" fill="#fff" stroke="#000" stroke-width="1.3"/><path d="M2.6 0.3L4 2.4M5.3 0.3L6.7 2.4M8 0.3L9.4 2.4M10.7 0.3L12.1 2.4" stroke="#000" stroke-width="1.3"/><path d="M2 1.6H12" stroke="#fff" stroke-width="0.5" stroke-dasharray="0.9 1.8" stroke-dashoffset="-2"/><path d="M2.1 3.6H6.8M2.1 5.7H9.7M2.1 9.7H9.7M2.1 11.8H7.8" stroke="#808080" stroke-width="0.9"/></svg>
<svg style="left:708px;top:615px" width="14.06" height="15.54" viewBox="0 0 19 21">
<rect x="0.6" y="1.6" width="17.3" height="18.3" fill="#fff" stroke="#000" stroke-width="1.2"/>
<path d="M2.5 0.8h13" stroke="#000" stroke-width="1.6" stroke-dasharray="1.8 1.4"/>
<path d="M2 6.5h15M2 9.5h15M2 12.5h15M2 15.5h15M2 17.8h15" stroke="#cfcfcf"/>
<rect x="17.6" y="2.5" width="1.4" height="18.5" fill="#000"/><rect x="1" y="19.4" width="18" height="1.6" fill="#000"/>
<path d="M8.6 7.2L5.6 13.4M6.4 11.6L3.2 17M6 12.6L10.2 16.8M7.4 9.8L11.6 11.8M7.2 9.6L3.6 11.4L2.6 13.2" stroke="#000" stroke-width="2.1" fill="none" stroke-linecap="round"/>
<circle cx="9.2" cy="6.6" r="1.5" fill="#000"/>
<path d="M13.6 1.4v7.8M9.6 5.3h8" stroke="#0000e8" stroke-width="2.7"/>
</svg>


<div class="a sunken1" style="left:4px;top:643px;width:978px;height:22px;"></div>
<div class="a sunken1" style="left:984px;top:643px;width:326px;height:22px;"></div>
<div class="a sunken1" style="left:1312px;top:643px;width:98px;height:22px;"></div>
<div class="t" style="left:1006.80px;top:647.00px;font-size:14px;font-weight:normal;color:#000;letter-spacing:-0.232px">C:\repos\SynPUFs CIDA Package\synpuf_test_pa</div>
<svg style="left:988px;top:649px" width="16" height="9" viewBox="0 0 16 9"><rect x="0.5" y="1.5" width="14" height="6" rx="1" fill="#e8e8e8" stroke="#000" stroke-width="1"/><path d="M2 8.5H15.5V3" stroke="#000" fill="none" stroke-width="1"/><path d="M2.5 3.5H12.5" stroke="#fff"/></svg>
<svg style="left:1408px;top:648px" width="16" height="16" viewBox="0 0 16 16"><path d="M1 16L16 1M6 16L16 6M11 16L16 11" stroke="#808080" stroke-width="2"/><path d="M0 16L16 0M5 16L16 5M10 16L16 10" stroke="#fff" stroke-width="1"/></svg>

</body>
</html>
